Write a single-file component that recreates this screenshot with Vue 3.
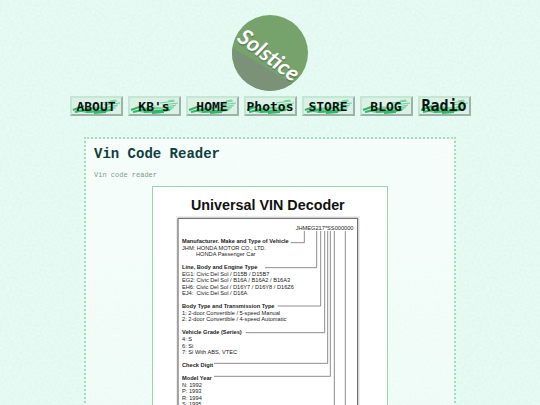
<template>
  <div class="page">
    <header class="header">
      <a href="#" class="logo" aria-label="Solstice">
        <svg viewBox="0 0 76 76" class="logo__image">
          <defs>
            <clipPath id="disc"><circle cx="38" cy="38" r="38" /></clipPath>
          </defs>
          <g clip-path="url(#disc)">
            <rect width="76" height="76" fill="#76a26b" />
            <path d="M-4 30 L76 78 L-4 78 Z" fill="#7b9279" />
          </g>
          <g transform="translate(4 25) rotate(37)">
            <text x="1" y="1" class="logo__text logo__text--shadow">Solstice</text>
            <text x="0" y="0" class="logo__text">Solstice</text>
          </g>
        </svg>
      </a>

      <nav class="nav">
        <a
          v-for="link in links"
          :key="link.label"
          href="#"
          class="nav__link"
          :class="link.size"
        >
          <svg viewBox="0 0 49 16" class="nav__brush" aria-hidden="true">
            <path d="M5 13 Q14 8 27 9 T45 8 L41 12 L34 14 L14 15 Z" fill="#6fd09a" />
            <path d="M1 12 L12 8 M3 14 L18 11 M14 14 L40 12 M22 15 L34 14" stroke="#35b56c" stroke-width="2" />
            <path d="M30 5 L45 3 M32 7 L48 5 M36 9 L46 7 M38 3 L44 2" stroke="#6fcf98" />
            <path d="M8 11 L26 8 M20 12 L44 10" stroke="#a5e3c2" />
          </svg>
          <span class="nav__label">{{ link.label }}</span>
        </a>
      </nav>
    </header>

    <main class="content">
      <h1 class="content__title">Vin Code Reader</h1>
      <p class="content__text">Vin code reader</p>

      <figure class="decoder">
        <svg viewBox="0 0 702 690" class="decoder__chart">
          <text x="114" y="69" class="decoder__title">Universal VIN Decoder</text>

          <path d="M72 690 V90 H618 V690" class="decoder__halo" />
          <path d="M75 690 V94 H614 V690" class="decoder__frame" />

          <text x="428" y="130" class="decoder__row">JHMEG217*SS000000</text>
          <path v-for="line in lines" :key="line" :d="line" class="decoder__line" />

          <text
            v-for="row in rows"
            :key="row.text"
            :x="row.indent ? 129 : 87"
            :y="168 + Math.round(row.line * 19.6)"
            class="decoder__row"
            :class="{ 'decoder__row--heading': row.heading }"
          >{{ row.text }}</text>
        </svg>
      </figure>
    </main>
  </div>
</template>

<script setup>
const links = [
  { label: 'ABOUT' },
  { label: "KB's" },
  { label: 'HOME' },
  { label: 'Photos' },
  { label: 'STORE' },
  { label: 'BLOG' },
  { label: 'Radio', size: 'nav__link--large' }
];

// line = row number in the chart, gaps are empty rows
const rows = [
  { line: 0, text: 'Manufacturer. Make and Type of Vehicle', heading: true },
  { line: 1, text: 'JHM: HONDA MOTOR CO., LTD.' },
  { line: 2, text: 'HONDA Passenger Car', indent: true },
  { line: 4, text: 'Line, Body and Engine Type', heading: true },
  { line: 5, text: 'EG1: Civic Del Sol / D15B / D15B7' },
  { line: 6, text: 'EG2: Civic Del Sol / B16A / B16A2 / B16A3' },
  { line: 7, text: 'EH6: Civic Del Sol / D16Y7 / D16Y8 / D16Z6' },
  { line: 8, text: 'EJ4:\u00a0 Civic Del Sol / D16A' },
  { line: 10, text: 'Body Type and Transmission Type', heading: true },
  { line: 11, text: '1: 2-door Convertible / 5-speed Manual' },
  { line: 12, text: '2: 2-door Convertible / 4-speed Automatic' },
  { line: 14, text: 'Vehicle Grade (Series)', heading: true },
  { line: 15, text: '4: S' },
  { line: 16, text: '6: Si' },
  { line: 17, text: '7: Si With ABS, VTEC' },
  { line: 19, text: 'Check Digit', heading: true },
  { line: 21, text: 'Model Year', heading: true },
  { line: 22, text: 'N: 1992' },
  { line: 23, text: 'P: 1993' },
  { line: 24, text: 'R: 1994' },
  { line: 25, text: 'S: 1995' }
];

const lines = [
  'M413 167 H454 V132',
  'M336 242 H491 V132',
  'M374 357 H503 V132',
  'M278 437 H515 V132',
  'M183 529 H524 V132',
  'M183 568 H532 V132',
  'M544 132 V690',
  'M577 132 V690'
];
</script>

<style>
body {
  margin: 0;
  background-color: #e6fbf3;
  background-image: url("data:image/svg+xml,%3Csvg xmlns='http://www.w3.org/2000/svg' width='160' height='160'%3E%3Cfilter id='n'%3E%3CfeTurbulence type='fractalNoise' baseFrequency='.4' numOctaves='2' stitchTiles='stitch'/%3E%3CfeColorMatrix values='0 0 0 0 .68 0 0 0 0 .86 0 0 0 0 .79 .9 0 0 0 -.34'/%3E%3C/filter%3E%3Crect width='160' height='160' filter='url(%23n)'/%3E%3C/svg%3E");
}

html {
  scrollbar-width: none;
}
</style>

<style scoped>
.page {
  font-family: "Liberation Mono", "Courier New", monospace;
}

.header {
  display: flex;
  flex-direction: column;
  align-items: center;
  gap: 5px;
  padding-top: 15px;
}

.logo,
.logo__image {
  display: block;
  width: 76px;
  height: 76px;
}

.logo__text {
  font-family: "Lato", sans-serif;
  font-size: 22px;
  font-style: italic;
  font-weight: 700;
  fill: #fff;
}

.logo__text--shadow {
  fill: #5d7d56;
}

.nav {
  display: flex;
  flex-wrap: wrap;
  justify-content: center;
  gap: 5px;
}

.nav__link {
  display: grid;
  box-sizing: border-box;
  width: 53px;
  height: 20px;
  border: 2px solid;
  border-color: #c3e6d5 #9bb3a8 #9bb3a8 #c3e6d5;
  background: #dbf1e6;
  color: #07150d;
  font-family: "DejaVu Sans Mono", monospace;
  font-size: 13px;
  font-weight: 700;
  line-height: 17px;
  text-decoration: none;
}

.nav__link--large {
  font-size: 15px;
}

/* the brush sits behind the label in the same grid cell */
.nav__brush,
.nav__label {
  grid-area: 1 / 1;
}

.nav__brush {
  width: 100%;
  height: 16px;
  fill: none;
}

.nav__label {
  z-index: 1;
  justify-self: center;
}

.content {
  box-sizing: border-box;
  max-width: 372px;
  margin: 21px auto 0;
  padding: 7px 8px;
  border: 2px dotted #a5dcc2;
  background: linear-gradient(rgba(255, 255, 255, .65), rgba(255, 255, 255, .4) 270px) padding-box;
}

.content__title {
  margin: 0 0 9px;
  color: #103f40;
  font-size: 14px;
  line-height: 16px;
}

.content__text {
  margin: 0 0 7px;
  color: #7d9a90;
  font-size: 7px;
  line-height: 8px;
}

.decoder {
  box-sizing: border-box;
  max-width: 236px;
  margin: 0 auto;
  border: 1px solid #93d6b0;
  background: #fff;
}

.decoder__chart {
  display: block;
  width: 100%;
  font-family: "Liberation Sans", Arial, sans-serif;
  fill: #222;
}

.decoder__title {
  font-size: 43px;
  font-weight: 700;
  fill: #111;
}

.decoder__row {
  font-size: 17px;
}

.decoder__row--heading {
  font-weight: 700;
}

.decoder__halo {
  fill: none;
  stroke: #ececec;
  stroke-width: 6;
}

.decoder__frame {
  fill: none;
  stroke: #555;
  stroke-width: 3;
}

.decoder__line {
  fill: none;
  stroke: #555;
  stroke-width: 2;
}
</style>
